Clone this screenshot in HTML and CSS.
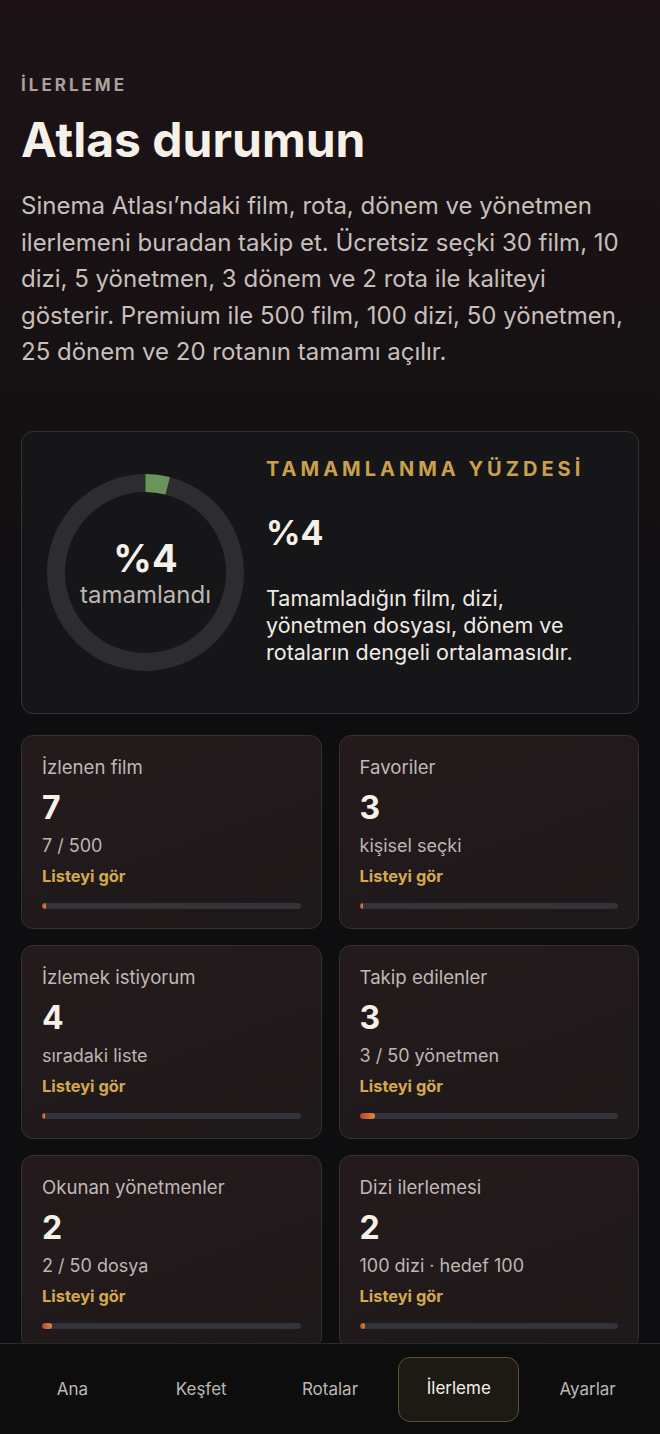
FILE: index.html
```html
<!DOCTYPE html>
<html lang="tr">
<head>
  <meta charset="UTF-8">
  <title>İlerleme - Sinema Atlası</title>
  <link rel="stylesheet" href="styles.css">
</head>
<body>
  <main class="page">
    <!-- Header -->
    <header class="intro">
      <div class="eyebrow">İLERLEME</div>
      <h1>Atlas durumun</h1>
      <p class="lead">Sinema Atlası’ndaki film, rota, dönem ve yönetmen ilerlemeni buradan takip et. Ücretsiz seçki 30 film, 10 dizi, 5 yönetmen, 3 dönem ve 2 rota ile kaliteyi gösterir. Premium ile 500 film, 100 dizi, 50 yönetmen, 25 dönem ve 20 rotanın tamamı açılır.</p>
    </header>

    <!-- Overall completion -->
    <section class="hero-card">
      <div class="ring">
        <svg width="197" height="197" viewBox="0 0 197 197">
          <circle class="ring-track" cx="98.5" cy="98.5" r="89.5"></circle>
          <circle class="ring-fill" cx="98.5" cy="98.5" r="89.5" stroke-dasharray="22.5 540" transform="rotate(-90 98.5 98.5)"></circle>
        </svg>
        <div class="ring-label">
          <span class="ring-value">%4</span>
          <span class="ring-caption">tamamlandı</span>
        </div>
      </div>
      <div class="hero-text">
        <div class="hero-title">TAMAMLANMA YÜZDESİ</div>
        <div class="hero-value">%4</div>
        <p class="hero-desc">Tamamladığın film, dizi, yönetmen dosyası, dönem ve rotaların dengeli ortalamasıdır.</p>
      </div>
    </section>

    <!-- Stat cards -->
    <section class="stats">
      <div class="stat-card">
        <div class="stat-label">İzlenen film</div>
        <div class="stat-value">7</div>
        <div class="stat-sub">7 / 500</div>
        <a class="stat-link" href="#">Listeyi gör</a>
        <div class="bar"><div class="bar-fill" style="width: 1.4%"></div></div>
      </div>
      <div class="stat-card">
        <div class="stat-label">Favoriler</div>
        <div class="stat-value">3</div>
        <div class="stat-sub">kişisel seçki</div>
        <a class="stat-link" href="#">Listeyi gör</a>
        <div class="bar"><div class="bar-fill" style="width: 1.2%"></div></div>
      </div>
      <div class="stat-card">
        <div class="stat-label">İzlemek istiyorum</div>
        <div class="stat-value">4</div>
        <div class="stat-sub">sıradaki liste</div>
        <a class="stat-link" href="#">Listeyi gör</a>
        <div class="bar"><div class="bar-fill" style="width: 1.2%"></div></div>
      </div>
      <div class="stat-card">
        <div class="stat-label">Takip edilenler</div>
        <div class="stat-value">3</div>
        <div class="stat-sub">3 / 50 yönetmen</div>
        <a class="stat-link" href="#">Listeyi gör</a>
        <div class="bar"><div class="bar-fill" style="width: 6%"></div></div>
      </div>
      <div class="stat-card">
        <div class="stat-label">Okunan yönetmenler</div>
        <div class="stat-value">2</div>
        <div class="stat-sub">2 / 50 dosya</div>
        <a class="stat-link" href="#">Listeyi gör</a>
        <div class="bar"><div class="bar-fill" style="width: 4%"></div></div>
      </div>
      <div class="stat-card">
        <div class="stat-label">Dizi ilerlemesi</div>
        <div class="stat-value">2</div>
        <div class="stat-sub">100 dizi · hedef 100</div>
        <a class="stat-link" href="#">Listeyi gör</a>
        <div class="bar"><div class="bar-fill" style="width: 2%"></div></div>
      </div>
    </section>
  </main>

  <!-- Bottom navigation -->
  <nav class="tabbar">
    <a class="tab" href="#">Ana</a>
    <a class="tab" href="#">Keşfet</a>
    <a class="tab" href="#">Rotalar</a>
    <a class="tab active" href="#">İlerleme</a>
    <a class="tab" href="#">Ayarlar</a>
  </nav>
</body>
</html>
```

FILE: styles.css
```css
/* Global */
body {
  margin: 0;
  font-family: Inter, 'Noto Sans', sans-serif;
  background: linear-gradient(180deg, #1d1316 0%, #161113 25%, #0e0e10 45%, #0e0e10 100%);
  color: #f3efe8;
  min-height: 100vh;
}

.page {
  padding: 75px 21px 120px;
}

/* Header */
.eyebrow {
  font-size: 17px;
  font-weight: 700;
  letter-spacing: 3px;
  line-height: 20px;
  color: #aaa19e;
}

h1 {
  margin: 17px 0 0;
  font-size: 48px;
  line-height: 56px;
  font-weight: 700;
  color: #f5f0e8;
}

.lead {
  margin: 20px 0 0;
  font-size: 24px;
  line-height: 36.5px;
  color: #c7bfbb;
}

/* Completion card */
.hero-card {
  margin-top: 60px;
  display: flex;
  gap: 22px;
  padding: 24px 40px 24px 25px;
  background: #161618;
  border: 1px solid #333336;
  border-radius: 12px;
}

.ring {
  position: relative;
  width: 197px;
  height: 197px;
  margin: 18px 0;
  flex-shrink: 0;
}

.ring svg {
  display: block;
}

.ring-track,
.ring-fill {
  fill: none;
  stroke-width: 18;
}

.ring-track {
  stroke: #2d2c31;
}

.ring-fill {
  stroke: #6a9458;
}

.ring-label {
  position: absolute;
  inset: 0;
  display: flex;
  flex-direction: column;
  align-items: center;
  justify-content: center;
  padding-top: 1px;
}

.ring-value {
  font-size: 38px;
  font-weight: 700;
  line-height: 44px;
  color: #f5f0e8;
}

.ring-caption {
  font-size: 24px;
  line-height: 30px;
  color: #bdb6b2;
}

.hero-text {
  flex: 1;
}

.hero-title {
  font-size: 20px;
  line-height: 26px;
  font-weight: 700;
  letter-spacing: 4px;
  white-space: nowrap;
  color: #c9a14c;
}

.hero-value {
  margin-top: 29px;
  font-size: 34px;
  line-height: 44px;
  font-weight: 700;
  color: #f5f0e8;
}

.hero-desc {
  margin: 30px 0 0;
  font-size: 21.5px;
  line-height: 27px;
  color: #efeae3;
}

/* Stat cards */
.stats {
  margin-top: 21px;
  display: grid;
  grid-template-columns: 1fr 1fr;
  gap: 16px 17px;
}

.stat-card {
  padding: 19px 20px 19px 20px;
  background: linear-gradient(160deg, #241a1c 0%, #1e191a 100%);
  border: 1px solid #363032;
  border-radius: 12px;
  display: flex;
  flex-direction: column;
}

.stat-label {
  font-size: 18.6px;
  line-height: 24px;
  color: #c0b8b5;
}

.stat-value {
  margin-top: 10px;
  font-size: 32px;
  line-height: 38px;
  font-weight: 700;
  color: #f5f0e8;
}

.stat-sub {
  margin-top: 7px;
  font-size: 18px;
  line-height: 24px;
  color: #bdb6b2;
}

.stat-link {
  margin-top: 7px;
  font-size: 16.4px;
  line-height: 22px;
  font-weight: 700;
  color: #d4a94e;
  text-decoration: none;
}

.bar {
  margin-top: 16px;
  height: 6px;
  border-radius: 3px;
  background: #33333b;
  overflow: hidden;
}

.bar-fill {
  height: 100%;
  min-width: 3px;
  border-radius: 3px;
  background: linear-gradient(90deg, #b8402e, #dc8c3c);
}

/* Bottom navigation */
.tabbar {
  position: fixed;
  left: 0;
  right: 0;
  bottom: 0;
  height: 90px;
  padding: 0 8px;
  display: grid;
  grid-template-columns: repeat(5, 1fr);
  align-items: center;
  background: #0d0d0e;
  border-top: 1px solid #2a2a2c;
}

.tab {
  margin: 0 4px;
  height: 65px;
  display: flex;
  align-items: center;
  justify-content: center;
  font-size: 17px;
  color: #bdb7b4;
  text-decoration: none;
  border: 1px solid transparent;
  border-radius: 12px;
}

.tab.active {
  color: #f5f0e8;
  background: #1d1a14;
  border-color: #5e4f30;
  padding-bottom: 3px;
  box-sizing: border-box;
}
```
